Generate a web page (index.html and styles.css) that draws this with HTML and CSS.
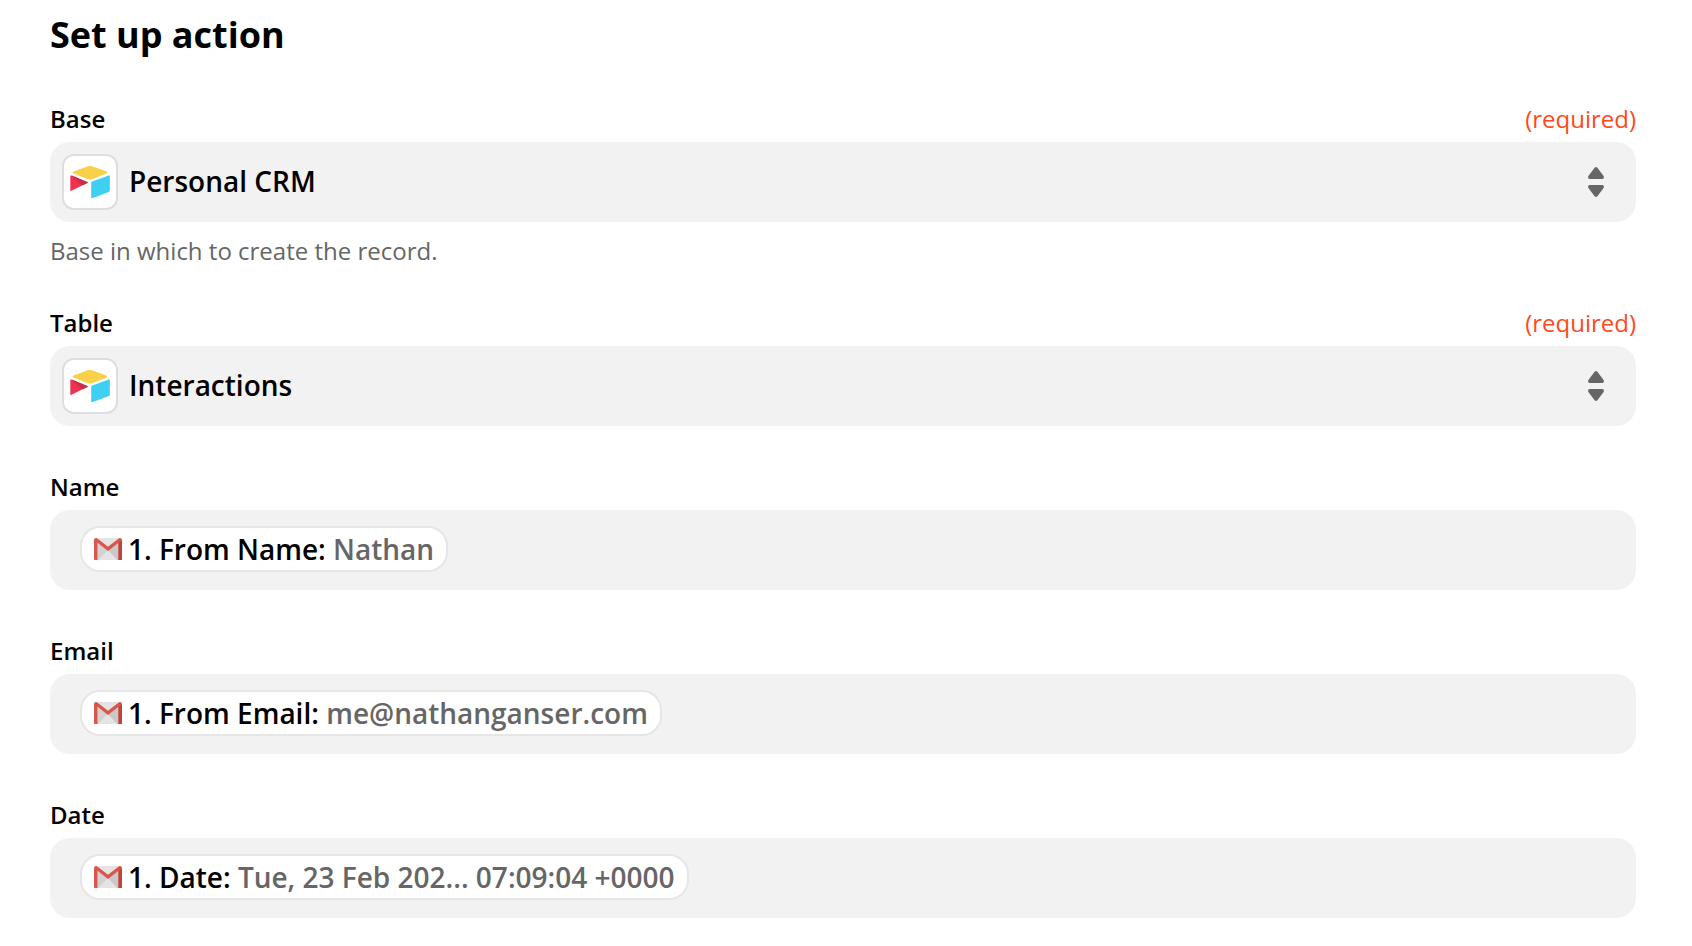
FILE: index.html
```html
<!doctype html>
<html lang="en">
<head>
  <meta charset="utf-8">
  <title>Set up action</title>
  <link rel="stylesheet" href="styles.css">
</head>
<body>
  <!-- icons shared by the fields -->
  <svg class="sprite" aria-hidden="true">
    <symbol id="airtable" viewBox="0 0 40 34">
      <path fill="#f7d147" d="M18 1.200Q20 .4 22 1.200L36.500 6.600Q38.500 7.500 36.500 8.400L22 14.200Q20 15 18 14.200L3.500 8.400Q1.500 7.500 3.500 6.600Z"/>
      <path fill="#3dd0f2" d="M21.200 18Q21.200 17 22.200 16.600L38.600 10.400Q39.800 10 39.800 11.200V25.500Q39.800 26.500 38.800 26.900L22.400 33.200Q21.200 33.700 21.200 32.400Z"/>
      <path fill="#ef3250" d="M.3 11.500Q.3 10 1.700 10.600L18 17.600 12 20.600 1.600 25.800Q.3 26.300 .3 25Z"/>
      <path fill="#c92f48" d="M1.700 10.600L17.500 17Q18.500 17.600 17.500 18.100L12.200 20.600Z"/>
    </symbol>
    <symbol id="gmail" viewBox="0 0 28 22">
      <path fill="#e4e4e4" d="M2 0H26V22H2Z"/>
      <path fill="#c6c6c6" d="M14 12.500L24.500 4V22H23Z"/>
      <path fill="#d2d2d2" d="M3.500 4L14 12.500 4.500 22H3.500Z"/>
      <path fill="#e4e4e4" d="M14 11.500L23.500 22H4.500Z"/>
      <path fill="#c9c9c9" d="M14 12L24.500 5V22H23.500Z"/>
      <path fill="#d9564c" d="M0 2Q0 0 2 0L3 .3 14 8.800 25 .3 26 0Q28 0 28 2V21Q28 22 27 22H24.500V4.800L14 13 3.500 4.800V22H1Q0 22 0 21Z"/>
      <path fill="#c2423a" d="M24.500 4.800L28 2V21Q28 22 27 22H24.500Z"/>
    </symbol>
    <symbol id="sort" viewBox="0 0 16 30">
      <path d="M6.600 .8Q8 -.6 9.400 .8L15.600 9Q16.500 11.800 14.500 12H1.500Q-.5 11.800 .4 9ZM6.600 29.200Q8 30.600 9.400 29.200L15.600 21Q16.500 18.200 14.500 18H1.500Q-.5 18.200 .4 21Z"/>
    </symbol>
  </svg>

  <form id="set-up-action">
    <h1>Set up action</h1>

    <div class="field">
      <div class="field-head">
        <label for="base">Base</label>
        <span class="required">(required)</span>
      </div>
      <div class="box select-box">
        <span class="app-icon"><svg><use href="#airtable"/></svg></span>
        <select id="base" name="base" aria-describedby="base-help" required>
          <option selected>Personal CRM</option>
        </select>
        <svg class="arrows"><use href="#sort"/></svg>
      </div>
      <p class="help" id="base-help">Base in which to create the record.</p>
    </div>

    <div class="field">
      <div class="field-head">
        <label for="table">Table</label>
        <span class="required">(required)</span>
      </div>
      <div class="box select-box">
        <span class="app-icon"><svg><use href="#airtable"/></svg></span>
        <select id="table" name="table" required>
          <option selected>Interactions</option>
        </select>
        <svg class="arrows"><use href="#sort"/></svg>
      </div>
    </div>

    <div class="field">
      <div class="field-head"><label for="name">Name</label></div>
      <div class="box text-box">
        <span class="pill"><svg><use href="#gmail"/></svg><span>1. From Name: <span class="value">Nathan</span></span></span>
        <input type="text" id="name" name="name">
      </div>
    </div>

    <div class="field">
      <div class="field-head"><label for="email">Email</label></div>
      <div class="box text-box">
        <span class="pill"><svg><use href="#gmail"/></svg><span>1. From Email: <span class="value">me@nathanganser.com</span></span></span>
        <input type="text" id="email" name="email">
      </div>
    </div>

    <div class="field">
      <div class="field-head"><label for="date">Date</label></div>
      <div class="box text-box">
        <span class="pill"><svg><use href="#gmail"/></svg><span>1. Date: <span class="value">Tue, 23 Feb 202... 07:09:04 +0000</span></span></span>
        <input type="text" id="date" name="date">
      </div>
    </div>
  </form>
</body>
</html>
```
FILE: styles.css
```css
* {
  box-sizing: border-box;
}
body {
  margin: 0;
  background-color: white;
  color: black;
  font-family: "Open Sans", sans-serif;
  font-size: 24px;
  line-height: 26px;
}
.sprite {
  display: none;
}
#set-up-action {
  display: flex;
  flex-direction: column;
  gap: 48px;
  padding: 12px 56px 28px 50px;
}
h1 {
  margin: 0;
  font-size: 36px;
  line-height: 46px;
  font-weight: 700;
}
.field-head {
  display: flex;
  justify-content: space-between;
  margin-bottom: 10px;
}
label {
  font-weight: 600;
}
.required {
  color: #ff4a1c;
}
.help {
  margin: 18px 0 0;
  color: #666;
  line-height: 22px;
}
.box {
  min-height: 80px;
  border-radius: 20px;
  background-color: #f2f2f2;
  font-size: 28px;
  font-weight: 600;
}
.box:focus-within {
  outline: 2px solid #999;
}

/* icon and arrows share the grid row with a select that spans all of it */
.select-box {
  display: grid;
  grid-template-columns: 80px 1fr 64px;
  align-items: center;
}
.select-box > * {
  grid-row: 1;
}
.select-box select {
  grid-column: 1 / -1;
  height: 80px;
  padding: 0 64px 2px 79px;
  appearance: none;
  border: 0;
  background: none;
  color: black;
  font: inherit;
  outline: none;
}
.app-icon {
  grid-column: 1;
  display: flex;
  align-items: center;
  justify-content: center;
  width: 56px;
  height: 56px;
  margin-left: 12px;
  border: 2px solid #d9dfe2;
  border-radius: 12px;
  background-color: white;
}
.app-icon svg {
  width: 40px;
  height: 34px;
}
.arrows {
  grid-column: 3;
  width: 16px;
  height: 30px;
  margin-left: 16px;
  fill: #666;
  pointer-events: none;
}

.text-box {
  display: flex;
  align-items: center;
  padding: 0 32px 2px 30px;
}
.text-box input {
  flex: 1;
  min-width: 0;
  border: 0;
  background: none;
  font: inherit;
  outline: none;
}
.pill {
  display: flex;
  align-items: center;
  gap: 6px;
  height: 46px;
  padding: 0 12px;
  border: 2px solid #e6e6e6;
  border-radius: 20px;
  background-color: white;
  white-space: nowrap;
}
.pill svg {
  width: 28px;
  height: 22px;
}
.value {
  color: #666;
}
```
